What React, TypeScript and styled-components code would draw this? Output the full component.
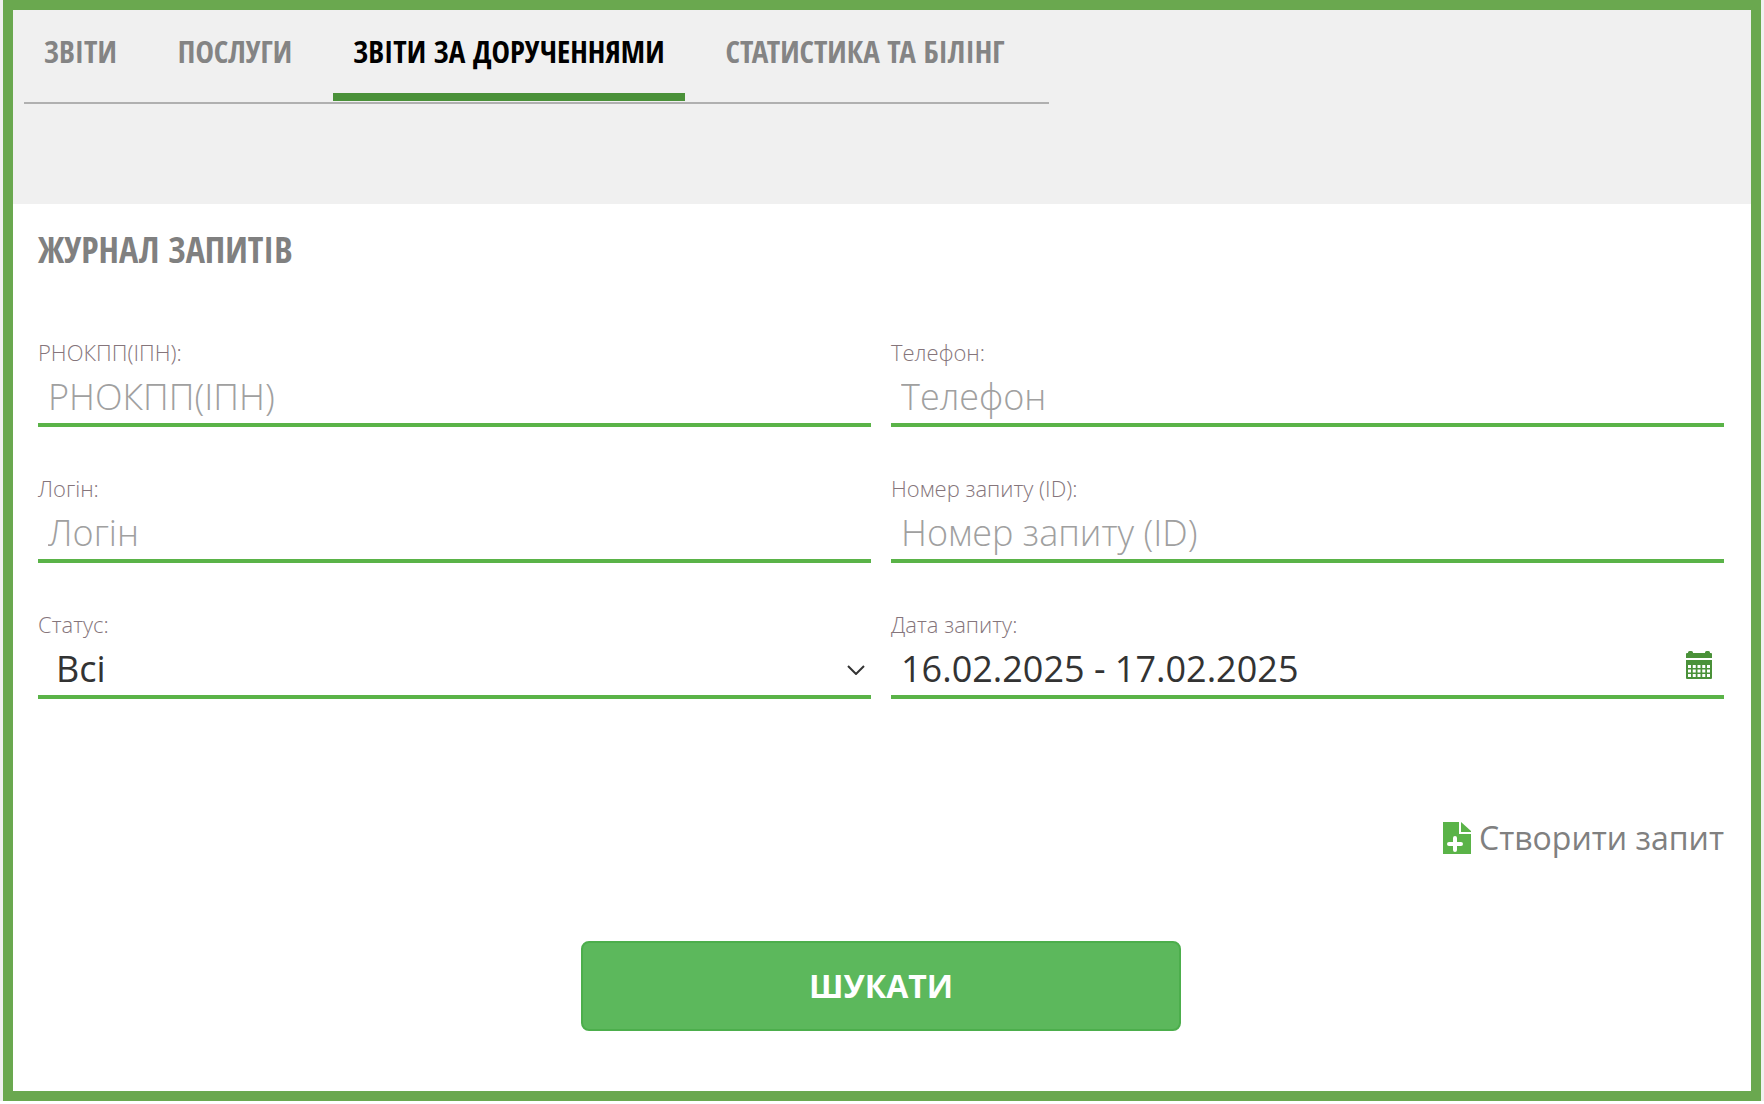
import React from 'react';
import styled, { createGlobalStyle } from 'styled-components';

const sans = '"Open Sans", "Noto Sans", sans-serif';
const condensed = '"Open Sans Condensed", "Noto Sans Condensed", "Liberation Sans Narrow", "Open Sans", sans-serif';

const GlobalStyle = createGlobalStyle`
  *, *::before, *::after { box-sizing: border-box; }
  body { margin: 0; background: #fff; font-family: ${sans}; }
`;

const Page = styled.div`
  padding: 0 3px;
  background: #f0f0f0;
  border-bottom: 3px solid #fff;
`;

const Frame = styled.div`
  border: 10px solid #6aa84f;
  background: #fff;
`;

const Header = styled.header`
  height: 194px;
  padding: 0 11px;
  background: #f0f0f0;
`;

const Tabs = styled.nav`
  display: inline-flex;
  gap: 21px;
  padding: 0 24px 1px 0;
  border-bottom: 2px solid #b0b0b0;
`;

const Tab = styled.a<{ $active?: boolean }>`
  padding: 19px 20px 20px;
  border-bottom: 8px solid ${(p) => (p.$active ? '#4a9139' : 'transparent')};
  color: ${(p) => (p.$active ? '#000' : '#848484')};
  font: 700 31px/44px ${condensed};
  text-decoration: none;
  text-transform: uppercase;
  white-space: nowrap;
`;

const Main = styled.main`
  padding: 20px 27px 60px 25px;
`;

const Title = styled.h1`
  margin: 0;
  color: #808080;
  font: 700 36px/52px ${condensed};
  text-transform: uppercase;
`;

const Form = styled.form`
  display: flex;
  flex-direction: column;
`;

const Fields = styled.div`
  display: grid;
  grid-template-columns: 1fr 1fr;
  gap: 46px 20px;
  margin-top: 61px;
`;

const Field = styled.div`
  display: flex;
  flex-direction: column;
`;

const Label = styled.label`
  color: #85757b;
  font-size: 22px;
  font-weight: 300;
  line-height: 30px;
`;

const Control = styled.div`
  display: flex;
  align-items: center;
  height: 60px;
  border-bottom: 4px solid #5ab348;
`;

const Input = styled.input`
  flex: 1;
  min-width: 0;
  height: 56px;
  padding: 2px 10px 0;
  border: 0;
  outline: 0;
  background: transparent;
  color: #333;
  font: 400 36px/52px ${sans};
  &::placeholder { color: #a0a0a0; font-weight: 300; opacity: 1; }
`;

const SelectBox = styled(Control)`
  display: grid;
  & > * { grid-area: 1 / 1; }
`;

const Select = styled.select`
  width: 100%;
  height: 56px;
  padding: 4px 40px 0 18px;
  border: 0;
  outline: 0;
  appearance: none;
  background: transparent;
  color: #333;
  font: 400 36px/52px ${sans};
`;

const Chevron = styled.svg`
  justify-self: end;
  margin: 6px 6px 0 0;
  pointer-events: none;
`;

const CalendarButton = styled.button`
  display: flex;
  margin: 0 12px 4px 0;
  padding: 0;
  border: 0;
  background: none;
  cursor: pointer;
`;

const CreateLink = styled.a`
  display: flex;
  align-items: center;
  align-self: flex-end;
  gap: 8px;
  margin-top: 117px;
  color: #808080;
  font-size: 32px;
  line-height: 44px;
  text-decoration: none;
`;

const SearchButton = styled.button`
  align-self: center;
  width: 600px;
  max-width: 100%;
  height: 90px;
  margin-top: 81px;
  border: 2px solid #4cae4c;
  border-radius: 8px;
  background: #5cb85c;
  color: #fff;
  font: 700 32px/44px ${sans};
  text-transform: uppercase;
  cursor: pointer;
`;

const CalendarIcon = () => (
  <svg width="26" height="28" viewBox="0 0 26 28" aria-hidden="true">
    <path fill="#4a9139" d="M0 7V3q0-1 1-1h1V1.500Q2 0 3.500 0h2Q7 0 7 1.500V2h12v-.5Q19 0 20.500 0h2Q24 0 24 1.500V2h1q1 0 1 1v4zM0 9h26v18q0 1-1 1H1q-1 0-1-1z" />
    {[14, 18.500, 23].map((y) =>
      [2, 6.750, 11.500, 16.250, 21].map((x) => <rect key={`${x}-${y}`} x={x} y={y} width="3" height="3" fill="#fff" />),
    )}
  </svg>
);

const AddFileIcon = () => (
  <svg width="28" height="32" viewBox="0 0 28 32" aria-hidden="true">
    <path fill="#5ab348" d="M0 0h16v12h12v20H0z" />
    <path fill="#5ab348" d="M18 0l10 9v1H18z" />
    <path stroke="#fff" strokeWidth="4" strokeLinecap="round" d="M12 16v12M6 22h12" />
  </svg>
);

const tabs = ['Звіти', 'Послуги', 'Звіти за дорученнями', 'Статистика та білінг'];

const textFields = [
  { id: 'tax-id', label: 'РНОКПП(ІПН)' },
  { id: 'phone', label: 'Телефон' },
  { id: 'login', label: 'Логін' },
  { id: 'request-id', label: 'Номер запиту (ID)' },
];

export default function App() {
  return (
    <Page>
      <GlobalStyle />
      <Frame>
        <Header>
          <Tabs>
            {tabs.map((name, i) => (
              <Tab key={name} href="#" $active={i === 2} aria-current={i === 2 ? 'page' : undefined}>
                {name}
              </Tab>
            ))}
          </Tabs>
        </Header>
        <Main>
          <Title>Журнал запитів</Title>
          <Form onSubmit={(e) => e.preventDefault()}>
            <Fields>
              {textFields.map((f) => (
                <Field key={f.id}>
                  <Label htmlFor={f.id}>{f.label}:</Label>
                  <Control>
                    <Input id={f.id} placeholder={f.label} />
                  </Control>
                </Field>
              ))}
              <Field>
                <Label htmlFor="status">Статус:</Label>
                <SelectBox>
                  <Select id="status" defaultValue="all">
                    <option value="all">Всі</option>
                  </Select>
                  <Chevron width="18" height="10" viewBox="0 0 18 10" aria-hidden="true">
                    <path fill="none" stroke="#333" strokeWidth="2" d="M1 1l8 8 8-8" />
                  </Chevron>
                </SelectBox>
              </Field>
              <Field>
                <Label htmlFor="date">Дата запиту:</Label>
                <Control>
                  <Input id="date" defaultValue="16.02.2025 - 17.02.2025" />
                  <CalendarButton type="button" aria-label="Дата запиту">
                    <CalendarIcon />
                  </CalendarButton>
                </Control>
              </Field>
            </Fields>
            <CreateLink href="#">
              <AddFileIcon />
              Створити запит
            </CreateLink>
            <SearchButton type="submit">Шукати</SearchButton>
          </Form>
        </Main>
      </Frame>
    </Page>
  );
}
